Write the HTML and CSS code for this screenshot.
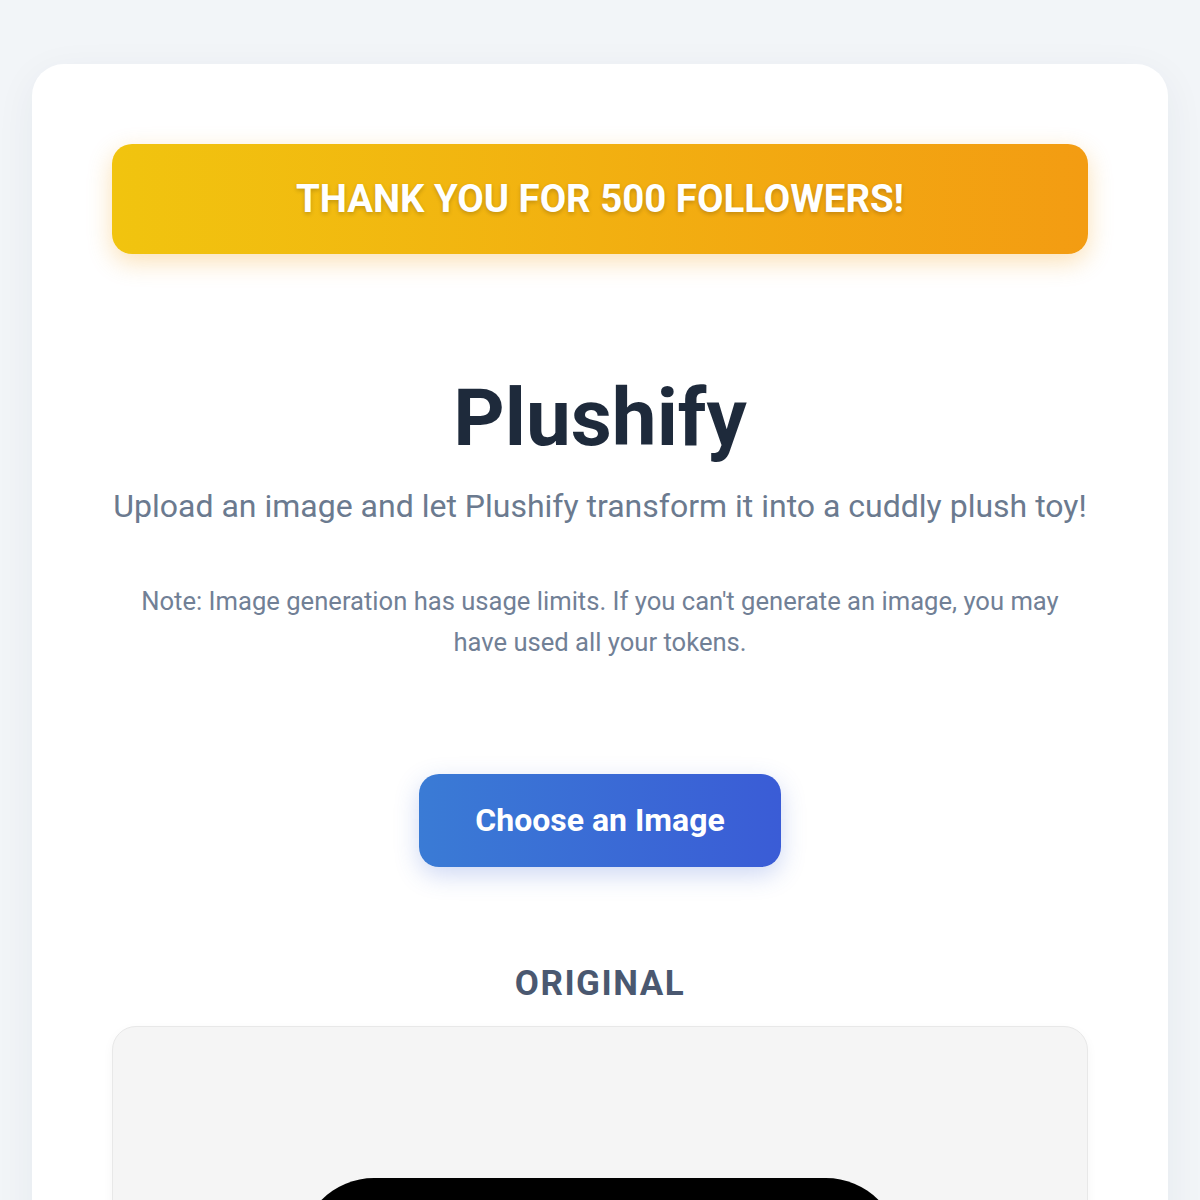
FILE: index.html
```html
<!DOCTYPE html>
<html lang="en">
<head>
  <meta charset="UTF-8">
  <meta name="viewport" content="width=device-width, initial-scale=1.0">
  <title>Plushify</title>
  <link rel="stylesheet" href="styles.css">
</head>
<body>
  <div class="card">
    <div class="banner">Thank you for 500 followers!</div>

    <h1 class="title">Plushify</h1>
    <p class="subtitle">Upload an image and let Plushify transform it into a cuddly plush toy!</p>
    <p class="note">Note: Image generation has usage limits. If you can't generate an image, you may have used all your tokens.</p>

    <label class="upload-button" for="file">Choose an Image</label>
    <input type="file" id="file" class="file-input" accept="image/*">

    <h2 class="section-title">Original</h2>
    <div class="preview-box">
      <div class="preview-image"></div>
    </div>
  </div>
</body>
</html>
```

FILE: styles.css
```css
body {
  margin: 0;
  padding: 64px 32px 0;
  background: #f2f5f8;
  font-family: Roboto, "Liberation Sans", Arial, sans-serif;
}

.card {
  background: white;
  border-radius: 32px;
  padding: 80px 80px 60px;
  box-shadow: 0 10px 40px rgba(30, 50, 80, 0.06);
  text-align: center;
}

.banner {
  background: linear-gradient(to right, #f1c40f, #f39c12);
  border-radius: 20px;
  padding: 32px 20px;
  color: white;
  font-size: 38.4px;
  line-height: 46px;
  font-weight: bold;
  text-transform: uppercase;
  text-shadow: 0 2px 4px rgba(0, 0, 0, 0.2);
  box-shadow: 0 8px 24px rgba(243, 156, 18, 0.3);
}

.title {
  margin: 118px 0 0;
  font-size: 80px;
  line-height: 92px;
  font-weight: bold;
  color: #1e2a3b;
}

.subtitle {
  margin: 20px 0 0;
  font-size: 32px;
  line-height: 45px;
  color: #6b7a8f;
}

.note {
  margin: 52px auto 0;
  max-width: 940px;
  font-size: 25.6px;
  line-height: 41px;
  color: #718096;
}

.upload-button {
  display: inline-block;
  margin-top: 111px;
  padding: 27px 56px;
  font-size: 32px;
  line-height: 39px;
  font-weight: bold;
  color: white;
  background: linear-gradient(to right, #3a7bd5, #3a5cd6);
  border-radius: 20px;
  box-shadow: 0 8px 24px rgba(58, 100, 213, 0.25);
  cursor: pointer;
}

.file-input {
  display: none;
}

.section-title {
  margin: 96px 0 21px;
  font-size: 35px;
  line-height: 42px;
  font-weight: bold;
  letter-spacing: 1.5px;
  text-transform: uppercase;
  color: #4a5870;
}

.preview-box {
  background: #f5f5f5;
  border: 1px solid #e8e8e8;
  border-radius: 24px;
  padding: 151px 0 60px;
  box-shadow: 0 4px 12px rgba(0, 0, 0, 0.04);
}

.preview-image {
  width: 600px;
  height: 400px;
  margin: 0 auto;
  background: black;
  border-radius: 74px;
}
```
